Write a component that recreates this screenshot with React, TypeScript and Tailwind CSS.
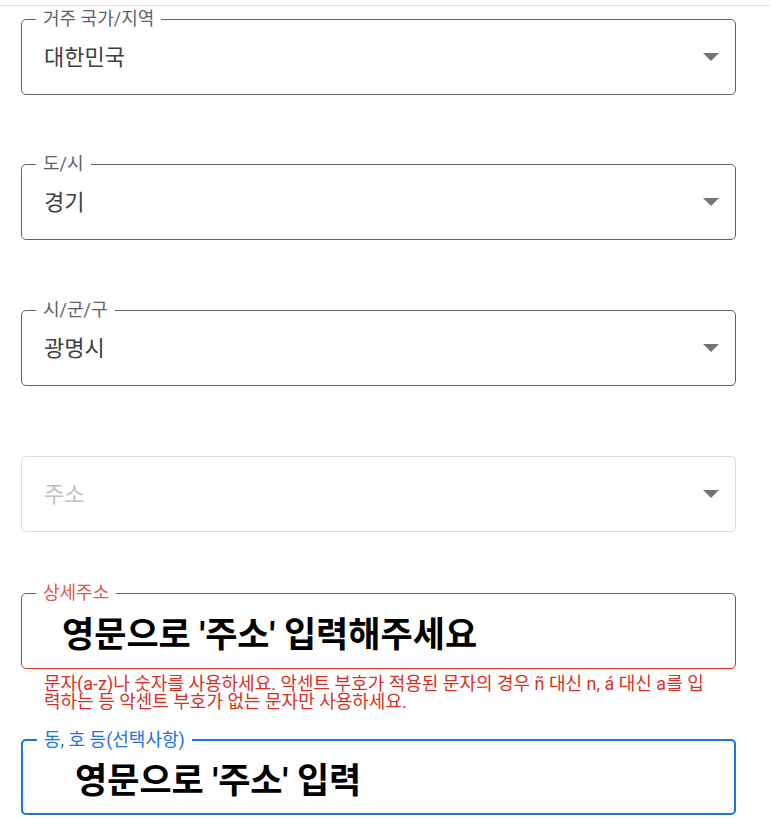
import { ReactNode } from 'react';

const FONT = 'font-[Roboto,"Noto_Sans_CJK_KR",sans-serif]';

type FieldProps = {
    label?: string;
    tone?: 'default' | 'disabled' | 'error' | 'focus';
    select?: boolean;
    className?: string;
    children: ReactNode;
};

function Arrow() {
    return (
        <svg width="16" height="8" viewBox="0 0 16 8" className="shrink-0">
            <path d="M0 0h16L8 8z" fill="#757575" />
        </svg>
    );
}

function Field({ label, tone = 'default', select, className = '', children }: FieldProps) {
    const border = {
        default: 'border border-[#5f6368]',
        disabled: 'border border-[#dadce0]',
        error: 'border border-[#d93025]',
        focus: 'border-2 border-[#1a73e8]',
    }[tone];
    const labelColor = {
        default: 'text-[#5f6368]',
        disabled: 'text-[#9aa0a6]',
        error: 'text-[#e0574c]',
        focus: 'text-[#1a73e8]',
    }[tone];

    return (
        <div className={`relative flex h-[76px] w-[715px] items-center rounded-[5px] pr-[16px] ${border} ${className}`}>
            {label && (
                <span className={`absolute left-[14px] top-[-11px] bg-white px-[7px] text-[18px] leading-[20px] ${labelColor}`}>
                    {label}
                </span>
            )}
            <div className="flex-1">{children}</div>
            {select && <Arrow />}
        </div>
    );
}

export default function App() {
    return (
        <div className={`min-h-[827px] bg-white ${FONT}`}>
            <div className="h-[6px] border-b border-[#e0e0e0] w-[770px]" />
            <div className="flex flex-col pl-[21px] pt-[13px]">
                <Field label="거주 국가/지역" select>
                    <span className="pl-[22px] text-[22px] text-[#3c4043]">대한민국</span>
                </Field>
                <Field label="도/시" select className="mt-[69px]">
                    <span className="pl-[22px] text-[22px] text-[#3c4043]">경기</span>
                </Field>
                <Field label="시/군/구" select className="mt-[70px]">
                    <span className="pl-[22px] text-[22px] text-[#3c4043]">광명시</span>
                </Field>
                <Field tone="disabled" select className="mt-[70px]">
                    <span className="pl-[22px] text-[22px] text-[#bdc1c6]">주소</span>
                </Field>
                <Field label="상세주소" tone="error" className="mt-[61px]">
                    <span className="block pl-[40px] pt-[10px] text-[35px] font-bold text-black">
                        영문으로 '주소' 입력해주세요
                    </span>
                </Field>
                <p className="pl-[23px] pt-[6px] text-[18px] leading-[18px] text-[#d93025]">
                    문자(a-z)나 숫자를 사용하세요. 악센트 부호가 적용된 문자의 경우 ñ 대신 n, á 대신 a를 입
                    <br />
                    력하는 등 악센트 부호가 없는 문자만 사용하세요.
                </p>
                <Field label="동, 호 등(선택사항)" tone="focus" className="mt-[28px] h-[75px]">
                    <span className="block pl-[52px] pt-[10px] text-[35px] font-bold text-black">
                        영문으로 '주소' 입력
                    </span>
                </Field>
            </div>
        </div>
    );
}
